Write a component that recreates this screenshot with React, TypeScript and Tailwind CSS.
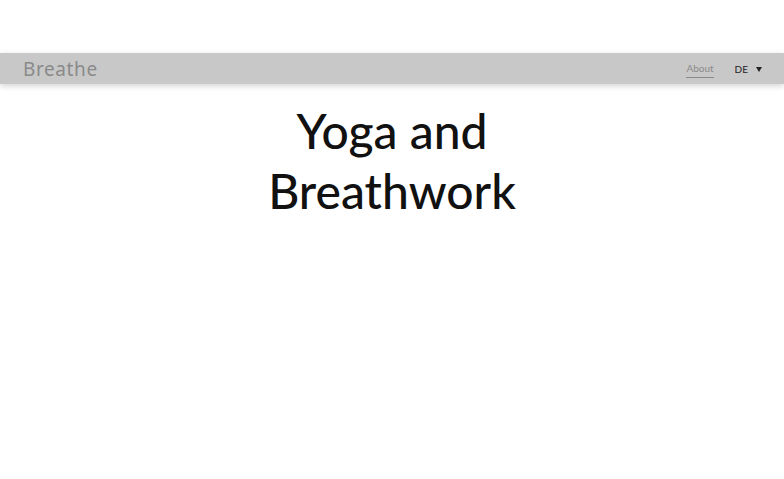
export default function App() {
  return (
    <div className="min-h-[479px] bg-white font-['Lato','Liberation_Sans',sans-serif]">
      <div className="h-[53px]" />
      <nav className="flex h-[31px] items-center justify-between bg-[#c8c8c8] pl-[23px] pr-[22px] shadow-[0_2px_6px_rgba(0,0,0,0.18)]">
        <span className="pt-[2px] text-[19px] tracking-[0.6px] text-[#8a8a8a] font-['Noto_Sans',sans-serif]">Breathe</span>
        <div className="flex items-center gap-[21px] pt-[2px] text-[10px]">
          <a className="border-b border-[#8a8a8a] pb-[1px] text-[#8a8a8a]">About</a>
          <div className="flex items-center gap-[8px] text-[#222]">
            <span>DE</span>
            <svg width="6" height="5" viewBox="0 0 6 5">
              <path d="M0 0h6L3 5z" fill="#222" />
            </svg>
          </div>
        </div>
      </nav>
      <h1 className="mt-[17px] text-center text-[48px] font-medium leading-[60px] text-[#111]">
        Yoga and
        <br />
        Breathwork
      </h1>
    </div>
  );
}
